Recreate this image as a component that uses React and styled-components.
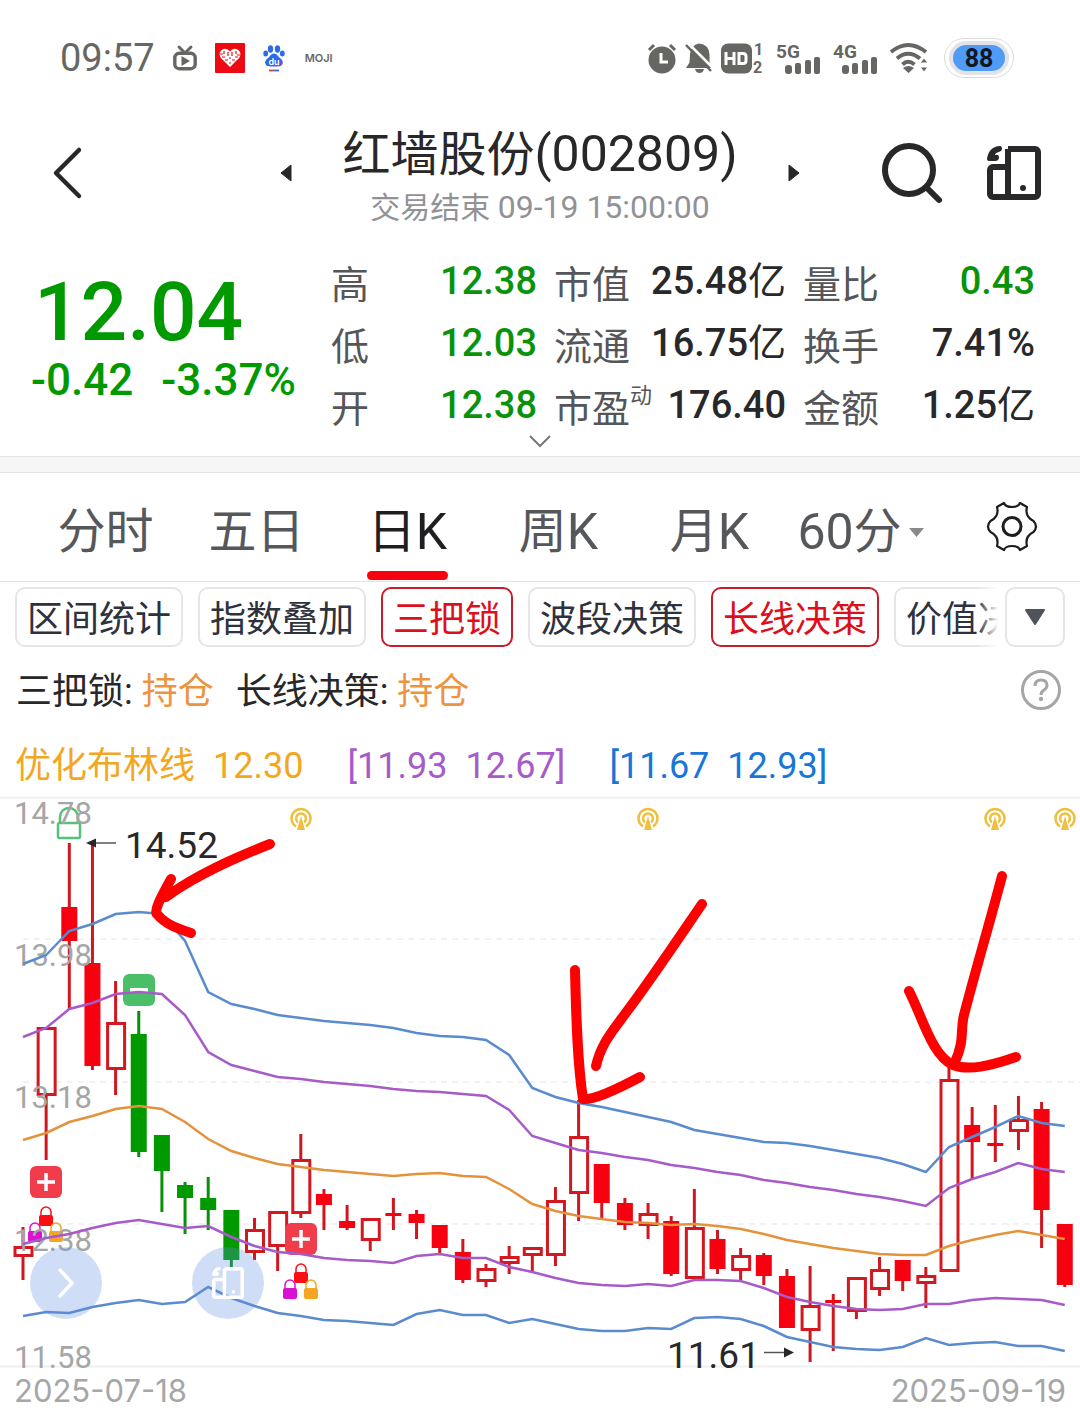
import React from "react";
import styled, { createGlobalStyle } from "styled-components";

const GlobalStyle = createGlobalStyle`
  * { box-sizing: border-box; }
  body {
    margin: 0;
    background: #fff;
    color: #28282a;
    font-family: Roboto, "Noto Sans CJK SC", sans-serif;
  }
  button {
    margin: 0;
    padding: 0;
    border: 0;
    background: none;
    color: inherit;
    font: inherit;
    cursor: pointer;
  }
  svg { display: block; flex: none; overflow: visible; }
`;

/* ---------- data ---------- */

const stats = [
  { label: "高", value: "12.38", down: true },
  { label: "市值", value: "25.48", unit: "亿" },
  { label: "量比", value: "0.43", down: true },
  { label: "低", value: "12.03", down: true },
  { label: "流通", value: "16.75", unit: "亿" },
  { label: "换手", value: "7.41%" },
  { label: "开", value: "12.38", down: true },
  { label: "市盈", sup: "动", value: "176.40" },
  { label: "金额", value: "1.25", unit: "亿" },
];

const chips = [
  { text: "区间统计" },
  { text: "指数叠加" },
  { text: "三把锁", on: true },
  { text: "波段决策" },
  { text: "长线决策", on: true },
  { text: "价值决策" },
];

// kind, high, body top, body bottom, low
const candles = [
  ["hollow", 1227, 1246, 1257, 1280],
  ["hollow", 1027, 1027, 1096, 1160],
  ["red", 843, 907, 941, 1009],
  ["red", 845, 963, 1066, 1070],
  ["hollow", 981, 1022, 1070, 1095],
  ["green", 1011, 1034, 1152, 1157],
  ["green", 1135, 1135, 1171, 1212],
  ["green", 1182, 1185, 1198, 1234],
  ["green", 1177, 1198, 1210, 1230],
  ["green", 1210, 1210, 1260, 1267],
  ["hollow", 1218, 1229, 1253, 1260],
  ["hollow", 1211, 1211, 1247, 1271],
  ["hollow", 1134, 1159, 1214, 1218],
  ["red", 1189, 1194, 1205, 1230],
  ["red", 1205, 1221, 1228, 1230],
  ["hollow", 1218, 1218, 1241, 1251],
  ["red", 1198, 1213, 1216, 1230],
  ["red", 1210, 1214, 1223, 1239],
  ["red", 1225, 1225, 1248, 1253],
  ["red", 1239, 1252, 1280, 1283],
  ["hollow", 1264, 1268, 1282, 1287],
  ["hollow", 1246, 1256, 1264, 1274],
  ["hollow", 1247, 1247, 1256, 1271],
  ["hollow", 1187, 1200, 1256, 1266],
  ["hollow", 1100, 1136, 1194, 1221],
  ["red", 1164, 1164, 1203, 1218],
  ["red", 1198, 1203, 1225, 1230],
  ["hollow", 1203, 1213, 1226, 1239],
  ["red", 1216, 1221, 1274, 1276],
  ["hollow", 1189, 1227, 1279, 1279],
  ["red", 1230, 1239, 1269, 1274],
  ["hollow", 1248, 1255, 1271, 1280],
  ["red", 1253, 1255, 1276, 1285],
  ["red", 1269, 1276, 1328, 1328],
  ["hollow", 1266, 1305, 1331, 1362],
  ["red", 1294, 1300, 1303, 1351],
  ["hollow", 1277, 1277, 1312, 1319],
  ["hollow", 1257, 1269, 1290, 1296],
  ["red", 1260, 1260, 1281, 1291],
  ["hollow", 1267, 1275, 1284, 1308],
  ["hollow", 1060, 1079, 1272, 1272],
  ["red", 1107, 1125, 1142, 1179],
  ["red", 1105, 1143, 1146, 1162],
  ["hollow", 1096, 1119, 1132, 1150],
  ["red", 1102, 1109, 1210, 1248],
  ["red", 1224, 1224, 1285, 1287],
];

const bands = [
  {
    color: "#5b8bcf",
    ys: [964, 955, 931, 924, 914, 912, 914, 941, 992, 1004, 1009, 1015, 1018, 1021, 1023, 1025, 1028, 1033, 1036, 1037, 1040, 1055, 1088, 1097, 1103, 1107, 1112, 1117, 1122, 1130, 1134, 1138, 1142, 1143, 1146, 1150, 1154, 1158, 1164, 1172, 1147, 1137, 1127, 1116, 1123, 1126],
  },
  {
    color: "#a65bc9",
    ys: [1037, 1028, 1009, 1003, 994, 992, 994, 1015, 1052, 1065, 1071, 1077, 1079, 1082, 1084, 1086, 1089, 1091, 1092, 1094, 1096, 1110, 1136, 1143, 1150, 1153, 1157, 1160, 1165, 1168, 1172, 1175, 1180, 1183, 1187, 1190, 1194, 1197, 1201, 1206, 1188, 1179, 1172, 1163, 1169, 1172],
  },
  {
    color: "#e5923d",
    ys: [1140, 1133, 1122, 1116, 1109, 1106, 1109, 1122, 1139, 1151, 1158, 1164, 1167, 1170, 1172, 1174, 1176, 1174, 1173, 1176, 1177, 1189, 1204, 1211, 1216, 1219, 1222, 1223, 1225, 1224, 1226, 1229, 1234, 1240, 1244, 1248, 1251, 1254, 1255, 1255, 1246, 1240, 1235, 1231, 1235, 1239],
  },
  {
    color: "#a65bc9",
    ys: [1244, 1238, 1234, 1228, 1223, 1220, 1224, 1228, 1226, 1237, 1246, 1252, 1254, 1258, 1260, 1261, 1263, 1256, 1254, 1258, 1258, 1267, 1272, 1278, 1283, 1285, 1286, 1284, 1286, 1280, 1280, 1281, 1288, 1297, 1302, 1306, 1309, 1310, 1309, 1304, 1304, 1300, 1298, 1299, 1300, 1305],
  },
  {
    color: "#5b8bcf",
    ys: [1316, 1312, 1313, 1307, 1303, 1300, 1304, 1302, 1287, 1298, 1306, 1313, 1316, 1320, 1321, 1323, 1325, 1314, 1310, 1315, 1315, 1323, 1319, 1324, 1329, 1331, 1331, 1328, 1329, 1318, 1317, 1319, 1326, 1337, 1342, 1347, 1349, 1350, 1347, 1338, 1345, 1343, 1342, 1346, 1346, 1351],
  },
];

const axis = [
  ["14.78", 824],
  ["13.98", 966],
  ["13.18", 1108],
  ["12.38", 1251],
  ["11.58", 1368],
];

const sketches = [
  "M270 844C232 859 196 875 166 897M171 879C163 894 153 911 157 914C165 924 176 928 191 933",
  "M575 970C576 1010 577 1060 583 1099Q595 1101 640 1077M702 904C672 948 648 984 622 1018C612 1032 601 1044 596 1066",
  "M909 991C922 1016 932 1056 953 1065C969 1071 990 1066 1016 1057M1002 876C990 922 975 972 964 1015C960 1030 965 1040 955 1062",
];

const candleX = (i) => 23 + i * 23.15;

/* ---------- icons ---------- */

const DeviceIcon = ({ size = 54 }) => (
  <svg width={size} height={size} viewBox="0 0 54 54" fill="none" stroke="currentColor" strokeWidth="6" strokeLinejoin="round">
    <path d="M21 3h27a3 3 0 0 1 3 3v42a3 3 0 0 1-3 3H6a3 3 0 0 1-3-3V24a3 3 0 0 1 3-3h15M21 3v48" />
    <path d="M0 13C1 5 6 0 13 0q2 0 2 3q0 2-3 3q-4 1-4 3q4-1 4 2q0 4-4 4H3q-3 0-3-2z" fill="currentColor" stroke="none" />
    <circle cx="36" cy="42" r="3" fill="currentColor" stroke="none" />
  </svg>
);

const TvIcon = () => (
  <svg width="24" height="27" viewBox="0 0 24 27">
    <path d="M6 2l5 5M18 2l-5 5" stroke="#666763" strokeWidth="3" strokeLinecap="round" />
    <rect x="1.8" y="8.3" width="20.4" height="15.4" rx="4.5" fill="none" stroke="#666763" strokeWidth="3.4" />
    <path d="M8.5 11l8.5 5l-8.5 5z" fill="#666763" />
  </svg>
);

const HeartIcon = () => (
  <svg width="30" height="30" viewBox="0 0 30 30">
    <rect width="30" height="30" rx="1" fill="#ee0a12" />
    <path d="M15 24L5.5 14.5Q3 9 7.5 6.500Q12 4.5 15 8.500Q18 4.5 22.5 6.500Q27 9 24.5 14.500z" fill="#fff" />
    <path d="M5 11h3M9 8v3M7 14h3M13 9v4M17 9v4M21 8v3M22 12h3M20 14h3M10 17h3M17 17h3M14 15h2M14 20h2" stroke="#ee0a12" strokeWidth="1.2" fill="none" />
  </svg>
);

const PawIcon = () => (
  <svg width="22" height="27" viewBox="0 0 22 27">
    <defs>
      <linearGradient id="paw" x1="0" y1="0" x2="1" y2="1">
        <stop offset="0" stopColor="#1f6fe8" />
        <stop offset="0.6" stopColor="#3566e6" />
        <stop offset="1" stopColor="#8a45e0" />
      </linearGradient>
    </defs>
    <g fill="#2b6be6">
      <ellipse cx="7.5" cy="4" rx="2.700" ry="3.7" />
      <ellipse cx="14.5" cy="4" rx="2.700" ry="3.7" />
      <ellipse cx="2.7" cy="8.5" rx="2.400" ry="3" />
      <ellipse cx="19.3" cy="8.5" rx="2.400" ry="3" />
    </g>
    <path d="M11 8.500c3 0 4 3 6 4.500c2.500 2 3.500 4 2.500 6c-1 2.500-3.500 2.500-8.500 2.500s-7.500 0-8.500-2.500c-1-2 0-4 2.500-6c2-1.500 3-4.500 6-4.500z" fill="url(#paw)" />
    <text x="11" y="19.5" textAnchor="middle" fontFamily="Inter" fontWeight="600" fontSize="9" fill="#fff">du</text>
    <path d="M6 25.500h5" stroke="#d4403b" strokeWidth="1.8" />
    <path d="M11 25.500h5" stroke="#356fe8" strokeWidth="1.8" />
  </svg>
);

const AlarmIcon = () => (
  <svg width="30" height="31" viewBox="0 0 30 31">
    <circle cx="15" cy="17" r="13.5" fill="#666763" />
    <path d="M2 7l5-5M28 7l-5-5" stroke="#666763" strokeWidth="3" />
    <path d="M14 10v9h7" stroke="#fff" strokeWidth="3" fill="none" />
  </svg>
);

const MuteIcon = () => (
  <svg width="28" height="31" viewBox="0 0 28 31">
    <path d="M5 11q1-9 9-10.500q10 1 10.500 11v8l3 5.500H1l3.500-5.500z" fill="#666763" />
    <path d="M10 26h9q-1 4-4.500 4T10 26z" fill="#666763" />
    <path d="M3 0l26 26" stroke="#fff" strokeWidth="2.5" />
    <path d="M1 2l25 26" stroke="#666763" strokeWidth="2.5" />
  </svg>
);

const HdIcon = () => (
  <svg width="43" height="31" viewBox="0 0 43 31">
    <rect y="0.5" width="31" height="30" rx="7" fill="#666763" />
    <path d="M5 9v13M13 9v13M5 15.500h8M18 9v13M17 10.500h5q3 0 3 3v4q0 3-3 3h-5" stroke="#fff" strokeWidth="3" fill="none" />
    <g fontFamily="Roboto" fontWeight="700" fontSize="16" fill="#666763">
      <text x="33" y="12">1</text>
      <text x="32" y="30">2</text>
    </g>
  </svg>
);

const SignalIcon = ({ label }) => (
  <svg width="45" height="31" viewBox="0 0 45 31" fill="#666763">
    <text x="0" y="15" fontFamily="Roboto" fontWeight="700" fontSize="19">{label}</text>
    <rect x="9" y="22" width="7" height="9" rx="3" />
    <rect x="19" y="20" width="6" height="11" rx="2" />
    <rect x="29" y="17" width="6" height="14" rx="2" />
    <rect x="38" y="14" width="6" height="17" rx="2" />
  </svg>
);

const WifiIcon = () => (
  <svg width="38" height="30" viewBox="0 0 38 30" fill="none" stroke="#666763" strokeWidth="4">
    <path d="M1 9Q18-5 36 9M7 15.500Q18 6 30 15.500M12.500 21.500Q18 16 24.500 21.500" />
    <path d="M13 25q5.500-4 11 0l-5.500 5z" fill="#666763" stroke="none" />
    <path d="M34 15l4 5h-8zM34 29l4-5h-8z" fill="#666763" stroke="#fff" strokeWidth="1" />
  </svg>
);

const GearIcon = () => (
  <svg width="50" height="50" viewBox="0 0 50 50" fill="none" stroke="#1d1d1f" strokeLinejoin="round">
    <path
      strokeWidth="2.2"
      d="M17 1Q18.500 5 25 5Q31.500 5 33 1L40 5Q37.500 14.500 46.500 19Q51.500 24.500 46.500 30Q37.500 34.500 40 44L33 48Q31.500 44 25 44Q18.500 44 17 48L10 44Q12.500 34.500 3.500 30Q-1.500 24.500 3.500 19Q12.500 14.500 10 5Z"
    />
    <circle cx="25" cy="24.5" r="9" strokeWidth="3" />
  </svg>
);

const Lock = ({ x, y, color }) => (
  <g transform={`translate(${x} ${y})`}>
    <path d="M-5 0v-4a5 5 0 0 1 10 0v4" fill="none" stroke={color} strokeWidth="1.5" />
    <rect x="-7" y="-1" width="14" height="11" rx="2" fill={color} />
  </g>
);

const LockTrio = ({ x, y }) => (
  <g>
    <Lock x={x} y={y} color="#fb0f14" />
    <Lock x={x - 11} y={y + 16} color="#dc10d0" />
    <Lock x={x + 10} y={y + 16} color="#f6a523" />
  </g>
);

const PlusMark = ({ x, y }) => (
  <g transform={`translate(${x} ${y})`}>
    <rect x="-16" y="-16" width="32" height="32" rx="6" fill="#f03c4b" />
    <path d="M-9 0H9M0-9V9" stroke="#fff" strokeWidth="3.5" />
  </g>
);

const EventMark = ({ x }) => (
  <g transform={`translate(${x} 818)`} fill="none" stroke="#efbf40" strokeWidth="2.5">
    <path d="M-5 8.500A9.500 9.500 0 1 1 5 8.500" />
    <path d="M-3 4.500A5 5 0 1 1 3 4.500" />
    <path d="M0-2l4 14h-8z" fill="#efbf40" stroke="none" />
  </g>
);

/* ---------- chart ---------- */

const Candle = ({ x, kind, high, top, bottom, low }) => {
  const color = kind === "green" ? "#009900" : kind === "red" ? "#f7000f" : "#d31820";
  const wick = kind === "green" ? "#089008" : "#cf1720";
  return (
    <g>
      <path d={`M${x} ${high}V${top}M${x} ${bottom}V${low}`} stroke={wick} strokeWidth="3" />
      {kind === "hollow" ? (
        <rect x={x - 8} y={top + 1.5} width="17" height={Math.max(bottom - top - 3, 2)} fill="#fff" stroke={color} strokeWidth="3" />
      ) : (
        <rect x={x - 8} y={top} width="16" height={bottom - top} fill={color} />
      )}
    </g>
  );
};

const KLineChart = () => (
  <ChartSvg viewBox="0 797 1080 571" role="img" aria-label="日K线图">
    <path d="M0 797.500H1080M0 1366.500H1080" stroke="#f1eff0" strokeWidth="2" />
    <path d="M23 939H1080M23 1082H1080M23 1224H1080" stroke="#eeeeee" strokeWidth="1.5" strokeDasharray="6 5" />

    <path d="M60 823V817a9 9 0 0 1 18 0v6" fill="none" stroke="#55c17a" strokeWidth="2.5" />
    <rect x="58" y="823" width="22" height="15" rx="1.5" fill="#fff" stroke="#55c17a" strokeWidth="2.5" />

    {candles.map(([kind, high, top, bottom, low], i) => (
      <Candle key={i} x={candleX(i)} kind={kind} high={high} top={top} bottom={bottom} low={low} />
    ))}

    <rect x="123" y="974" width="32" height="32" rx="6" fill="#4abf68" />
    <rect x="130" y="988" width="18" height="4" fill="#fff" />
    <PlusMark x={46} y={1182} />
    <PlusMark x={301} y={1239} />
    <LockTrio x={46} y={1216} />
    <LockTrio x={301} y={1273} />
    {[301, 648, 995, 1065].map((x) => (
      <EventMark key={x} x={x} />
    ))}

    <g fontFamily="Roboto" fontSize="31" fill="#a6a6a6">
      {axis.map(([text, y]) => (
        <text key={text} x="14" y={y}>{text}</text>
      ))}
    </g>

    {bands.map((band, n) => (
      <polyline
        key={n}
        points={band.ys.map((y, i) => `${candleX(i)},${y}`).join(" ")}
        fill="none"
        stroke={band.color}
        strokeWidth="2.5"
      />
    ))}

    <g fontFamily="Roboto" fontSize="37" fill="#28282a">
      <text x="125" y="858">14.52</text>
      <text x="667" y="1368">11.61</text>
    </g>
    <path d="M94 843H116M764 1352.500H786" stroke="#555" strokeWidth="1.5" />
    <path d="M86 843l10-4.500v9zM794 1352.500l-10-5v10z" fill="#28282a" />

    <g fill="none" stroke="#ff0000" strokeWidth="10" strokeLinecap="round" strokeLinejoin="round">
      {sketches.map((d) => (
        <path key={d} d={d} />
      ))}
    </g>
  </ChartSvg>
);

/* ---------- page ---------- */

export default function App() {
  return (
    <Page>
      <GlobalStyle />
      <StatusBar>
        <StatusGroup $gap={18}>
          <Clock>09:57</Clock>
          <TvIcon />
          <HeartIcon />
          <PawIcon />
          <Moji>MOJI</Moji>
        </StatusGroup>
        <StatusGroup $gap={12}>
          <StatusGroup $gap={8}>
            <AlarmIcon />
            <MuteIcon />
            <HdIcon />
          </StatusGroup>
          <SignalIcon label="5G" />
          <SignalIcon label="4G" />
          <WifiIcon />
          <Battery><BatteryLevel>88</BatteryLevel></Battery>
        </StatusGroup>
      </StatusBar>

      <Header>
        <IconButton aria-label="返回">
          <svg width="28" height="52" viewBox="0 0 28 52" fill="none" stroke="#28282a" strokeWidth="4.5" strokeLinecap="round" strokeLinejoin="round">
            <path d="M26 3L3 26L26 49" />
          </svg>
        </IconButton>
        <TitleGroup>
          <IconButton aria-label="上一只">
            <svg width="12" height="18" viewBox="0 0 12 18"><path d="M1 9l10-8v16z" fill="#28282a" stroke="#28282a" strokeLinejoin="round" /></svg>
          </IconButton>
          <Titles>
            <Title>红墙股份<Num $size={50}>(002809)</Num></Title>
            <Subtitle>交易结束 <Num $size={32}>09-19 15:00:00</Num></Subtitle>
          </Titles>
          <IconButton aria-label="下一只">
            <svg width="12" height="18" viewBox="0 0 12 18"><path d="M11 9L1 1v16z" fill="#28282a" stroke="#28282a" strokeLinejoin="round" /></svg>
          </IconButton>
        </TitleGroup>
        <Actions>
          <IconButton aria-label="搜索">
            <svg width="62" height="62" viewBox="0 0 62 62" fill="none" stroke="#28282a" strokeWidth="6" strokeLinecap="round">
              <circle cx="28" cy="28" r="24" />
              <path d="M46 46l12 12" />
            </svg>
          </IconButton>
          <IconButton aria-label="横屏"><DeviceIcon /></IconButton>
        </Actions>
      </Header>

      <Quote>
        <PriceBox>
          <Price>12.04</Price>
          <Change><span>-0.42</span><span>-3.37%</span></Change>
        </PriceBox>
        <Stats>
          {stats.map((s) => (
            <Stat key={s.label}>
              <StatLabel>{s.label}{s.sup && <Sup>{s.sup}</Sup>}</StatLabel>
              <StatValue $down={s.down}>{s.value}{s.unit && <Unit>{s.unit}</Unit>}</StatValue>
            </Stat>
          ))}
        </Stats>
      </Quote>
      <Expand aria-label="展开">
        <svg width="22" height="13" viewBox="0 0 22 13" fill="none" stroke="#77777a" strokeWidth="2"><path d="M1 1l10 10L21 1" /></svg>
      </Expand>
      <Band />

      <Tabs>
        <Tab><TabText>分时</TabText></Tab>
        <Tab><TabText>五日</TabText></Tab>
        <Tab $active><TabText>日<Num $size={50}>K</Num></TabText></Tab>
        <Tab><TabText>周<Num $size={50}>K</Num></TabText></Tab>
        <Tab><TabText>月<Num $size={50}>K</Num></TabText></Tab>
        <Tab>
          <TabText>
            <Num $size={50}>60</Num>分
            <TabCaret width="15" height="9" viewBox="0 0 15 9"><path d="M0 0h15L7.500 9z" fill="#8a8a8c" /></TabCaret>
          </TabText>
        </Tab>
        <Settings aria-label="设置"><GearIcon /></Settings>
      </Tabs>

      <ChipBar>
        <ChipScroll>
          {chips.map((c) => (
            <Chip key={c.text} $on={c.on}>{c.text}</Chip>
          ))}
        </ChipScroll>
        <MoreButton aria-label="更多指标">
          <svg width="20" height="17" viewBox="0 0 20 17"><path d="M1 1h18l-9 14z" fill="#50525c" stroke="#50525c" strokeWidth="2" strokeLinejoin="round" /></svg>
        </MoreButton>
      </ChipBar>

      <SignalRow>
        <span>三把锁: <Hold>持仓</Hold></span>
        <span>长线决策: <Hold>持仓</Hold></span>
        <Help aria-label="帮助">
          <svg width="40" height="40" viewBox="0 0 40 40" fill="none" stroke="#a6a6a6" strokeWidth="3">
            <circle cx="20" cy="20" r="18.5" />
            <path d="M14 16q0-6 6-6t6 5.500q0 2.500-3 4.500q-3 2-3 5" />
            <circle cx="20" cy="29" r="2.2" fill="#a6a6a6" stroke="none" />
          </svg>
        </Help>
      </SignalRow>

      <BollRow>
        <BollItem $color="#f2a71f">优化布林线<span>12.30</span></BollItem>
        <BollItem $color="#a65bc9"><span>[11.93</span><span>12.67]</span></BollItem>
        <BollItem $color="#1876d8"><span>[11.67</span><span>12.93]</span></BollItem>
      </BollRow>

      <ChartBox>
        <KLineChart />
        <FloatButtons>
          <FloatButton aria-label="展开菜单">
            <svg width="18" height="30" viewBox="0 0 18 30" fill="none" stroke="#fff" strokeWidth="3.5" strokeLinecap="round" strokeLinejoin="round"><path d="M3 2l12 13L3 28" /></svg>
          </FloatButton>
          <FloatButton aria-label="切换横屏"><DeviceIcon size={32} /></FloatButton>
        </FloatButtons>
      </ChartBox>
      <DateRow>
        <time>2025-07-18</time>
        <time>2025-09-19</time>
      </DateRow>
    </Page>
  );
}

const Page = styled.main`
  width: 100%;
  overflow: hidden;
`;

const Num = styled.span`
  font-size: ${(p) => p.$size}px;
`;

const IconButton = styled.button`
  display: flex;
  align-items: center;
  justify-content: center;
`;

const StatusBar = styled.div`
  display: flex;
  justify-content: space-between;
  align-items: center;
  height: 116px;
  padding: 0 66px 0 60px;
`;

const StatusGroup = styled.div`
  display: flex;
  align-items: center;
  gap: ${(p) => p.$gap}px;
`;

const Clock = styled.span`
  font-size: 38px;
  line-height: 44px;
  color: #666763;
`;

const Moji = styled.span`
  padding-left: 2px;
  font: 600 11px/16px Inter, sans-serif;
  color: #666763;
`;

const Battery = styled.div`
  display: flex;
  align-items: center;
  justify-content: center;
  width: 70px;
  height: 40px;
  margin-left: 4px;
  border: 1px solid #dcdde2;
  border-radius: 20px;
`;

const BatteryLevel = styled.span`
  width: 60px;
  height: 34px;
  border: 4px solid #e3e3e6;
  border-radius: 17px;
  background: #4f9bf5;
  color: #101828;
  font-weight: 700;
  font-size: 25px;
  line-height: 27px;
  text-align: center;
`;

const Header = styled.header`
  display: grid;
  grid-template-columns: 1fr auto 1fr;
  align-items: center;
  justify-items: start;
  height: 110px;
  padding: 0 39px 0 53px;
`;

const TitleGroup = styled.div`
  display: flex;
  align-items: center;
  gap: 50px;
  margin-right: 14px;
`;

const Titles = styled.div`
  padding-top: 8px;
  text-align: center;
`;

const Title = styled.h1`
  margin: 0;
  font-size: 48px;
  font-weight: 400;
  line-height: 60px;
  white-space: nowrap;
`;

const Subtitle = styled.div`
  font-size: 30px;
  line-height: 44px;
  color: #929296;
`;

const Actions = styled.div`
  display: flex;
  align-items: center;
  gap: 44px;
  justify-self: end;
`;

const Quote = styled.section`
  display: flex;
  justify-content: space-between;
  padding: 24px 45px 0 31px;
`;

const PriceBox = styled.div`
  width: 276px;
  padding-top: 18px;
  color: #009900;
  font-weight: 500;
`;

const Price = styled.div`
  padding-left: 3px;
  font-size: 82px;
  line-height: 88px;
`;

const Change = styled.div`
  display: flex;
  gap: 28px;
  font-size: 44px;
  line-height: 48px;
`;

const Stats = styled.dl`
  display: grid;
  grid-template-columns: 206fr 232fr 232fr;
  column-gap: 17px;
  flex: 0 1 704px;
  margin: 0;
`;

const Stat = styled.div`
  display: flex;
  justify-content: space-between;
  height: 62px;
`;

const StatLabel = styled.dt`
  display: flex;
  padding-top: 4px;
  font-size: 38px;
  line-height: 62px;
  color: #555659;
`;

const Sup = styled.sup`
  font-size: 22px;
  line-height: 36px;
`;

const StatValue = styled.dd`
  margin: 0;
  font-size: 38px;
  font-weight: 500;
  line-height: 62px;
  color: ${(p) => (p.$down ? "#0a930a" : "#28282a")};
`;

const Unit = styled.span`
  font-weight: 400;
`;

const Expand = styled(IconButton)`
  width: 100%;
  height: 20px;
  padding-bottom: 9px;
`;

const Band = styled.div`
  height: 17px;
  border: solid #e3e4e4;
  border-width: 1px 0;
  background: #f6f6f6;
`;

const Tabs = styled.nav`
  display: grid;
  grid-template-columns: repeat(6, 151fr) 144fr;
  height: 109px;
  padding-left: 30px;
  border-bottom: 1px solid #e3e4e6;
`;

const Tab = styled.button`
  display: flex;
  flex-direction: column;
  align-items: center;
  color: ${(p) => (p.$active ? "#1f1f21" : "#55575a")};

  &::after {
    content: "";
    width: 81px;
    height: 9px;
    border-radius: 5px;
    background: ${(p) => (p.$active ? "#f7000f" : "transparent")};
  }
`;

const TabText = styled.span`
  display: flex;
  align-items: center;
  height: 98px;
  padding-top: 20px;
  font-size: 48px;
  line-height: 60px;
  white-space: nowrap;
`;

const TabCaret = styled.svg`
  margin-left: 7px;
`;

const Settings = styled(IconButton)`
  justify-content: flex-end;
  padding-right: 43px;
`;

const ChipBar = styled.div`
  display: flex;
  gap: 7px;
  padding: 5px 15px 0;
`;

const ChipScroll = styled.div`
  position: relative;
  display: flex;
  flex: 1;
  gap: 15px;
  min-width: 0;
  overflow: hidden;

  &::after {
    content: "";
    position: absolute;
    top: 0;
    right: 0;
    width: 20px;
    height: 100%;
    background: linear-gradient(to right, rgba(255, 255, 255, 0), #fff);
  }
`;

const Chip = styled.button`
  flex: none;
  height: 60px;
  padding: 6px 10px 0;
  border: 2px solid ${(p) => (p.$on ? "#c81d2a" : "#e5e5e9")};
  border-radius: 10px;
  color: ${(p) => (p.$on ? "#dc101a" : "#2d323d")};
  font-size: 36px;
  line-height: 48px;
`;

const MoreButton = styled(IconButton)`
  width: 60px;
  height: 60px;
  border: 2px solid #e5e5e9;
  border-radius: 10px;
`;

const SignalRow = styled.div`
  display: flex;
  align-items: center;
  gap: 22px;
  height: 86px;
  padding: 0 19px 0 16px;
  font-size: 36px;
  line-height: 48px;

  span {
    padding-top: 4px;
  }
`;

const Hold = styled.span`
  color: #ed9440;
`;

const Help = styled(IconButton)`
  margin-left: auto;
`;

const BollRow = styled.div`
  display: flex;
  gap: 44px;
  height: 64px;
  padding-left: 15px;
  font-size: 36px;
  line-height: 66px;
`;

const BollItem = styled.span`
  display: flex;
  gap: 18px;
  color: ${(p) => p.$color};
`;

const ChartBox = styled.section`
  position: relative;
`;

const ChartSvg = styled.svg`
  width: 100%;
  height: auto;
`;

const FloatButtons = styled.div`
  position: absolute;
  left: 30px;
  bottom: 49px;
  display: flex;
  gap: 90px;
`;

const FloatButton = styled(IconButton)`
  width: 72px;
  height: 72px;
  border-radius: 50%;
  background: rgba(98, 144, 225, 0.3);
  color: #fff;
`;

const DateRow = styled.div`
  display: flex;
  justify-content: space-between;
  height: 47px;
  padding: 0 14px;
  font-family: Inter, sans-serif;
  font-size: 31px;
  line-height: 46px;
  color: #a6a6a6;
`;
